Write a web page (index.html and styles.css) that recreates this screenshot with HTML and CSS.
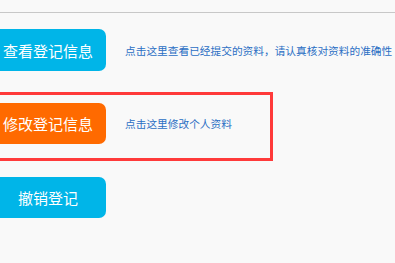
FILE: index.html
```html
<!DOCTYPE html>
<html lang="zh-CN">
<head>
<meta charset="utf-8">
<title>登记信息</title>
<link rel="stylesheet" href="styles.css">
</head>
<body>
<div class="topbar"></div>
<div class="page">
  <div class="row">
    <a class="btn btn-blue">查看登记信息</a>
    <span class="desc">点击这里查看已经提交的资料，请认真核对资料的准确性</span>
  </div>
  <div class="box">
    <div class="row">
      <a class="btn btn-orange">修改登记信息</a>
      <span class="desc">点击这里修改个人资料</span>
    </div>
  </div>
  <div class="row row-last">
    <a class="btn btn-blue">撤销登记</a>
  </div>
</div>
</body>
</html>
```

FILE: styles.css
```css
html, body {
  margin: 0;
  padding: 0;
  background: #f9f9f9;
  overflow: hidden;
  font-family: "Noto Sans CJK SC", "Noto Sans", sans-serif;
}
.topbar {
  height: 12px;
  border-bottom: 1px solid #c8c8c8;
}
.page {
  margin-left: -10px;
  padding-top: 16px;
}
.row {
  display: flex;
  align-items: center;
  gap: 19px;
  height: 42px;
  white-space: nowrap;
}
.btn {
  display: flex;
  align-items: center;
  justify-content: center;
  width: 116px;
  height: 42px;
  border-radius: 7px;
  color: #ffffff;
  font-size: 15px;
  line-height: 1;
  flex: none;
}
.btn-blue { background: #00b5e8; }
.btn-orange { background: #ff6a00; }
.desc {
  font-size: 10.7px;
  color: #2b6fc4;
}
.box {
  margin-top: 21px;
  margin-left: -13px;
  padding: 8px 0 14px 10px;
  width: 296px;
  box-sizing: border-box;
  border: 3px solid #ff3a3a;
}
.box .row, .box .btn { height: 41px; }
.row-last { margin-top: 16px; height: 41px; }
.row-last .btn { height: 41px; }
```
